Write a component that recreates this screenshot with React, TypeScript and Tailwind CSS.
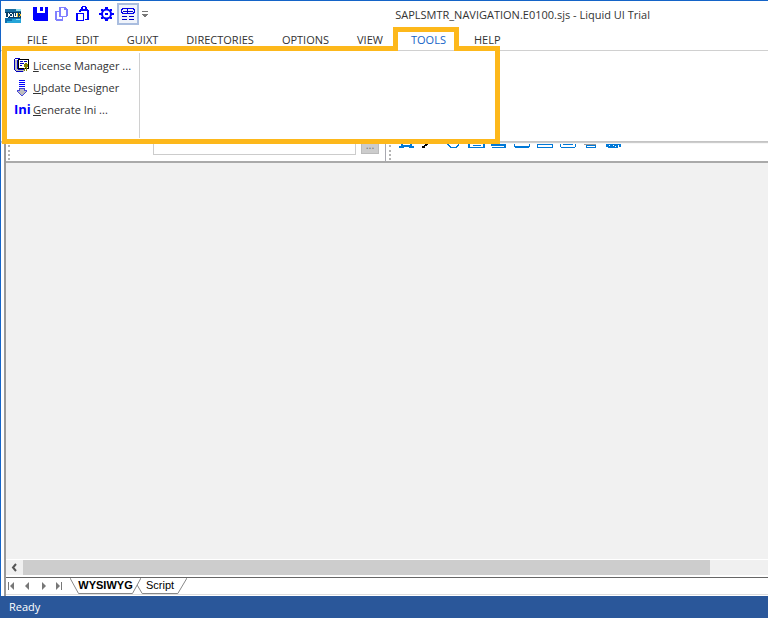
import React from "react";

const menus = ["FILE", "EDIT", "GUIXT", "DIRECTORIES", "OPTIONS", "VIEW", "TOOLS", "HELP"];

function Grip() {
  return <div className="mb-px mt-[3px] w-[3px] border-l-2 border-dotted border-[#b4b4b4]" />;
}

function AppLogo() {
  return (
    <svg width="16" height="20" shapeRendering="crispEdges" aria-hidden="true">
      <path d="M0 5h16v3H0z" fill="#1c6f9f" />
      <path d="M0 8h16v6H0z" fill="#073f66" />
      <path d="M0 14h16v5H0z" fill="#0d6fae" />
      <path d="M7 15h9v4H7zM2 17h5v2H2z" fill="#25a5d8" />
      <path d="M11 5h5v2h-5zM11 15h4v1h-4z" fill="#8fe0ee" />
      <path d="M0 9h1v4h2v1H0zM3 9h1v4H3zM5 9h2v1H5zM5 12h3v1H5zM4 10h1v2H4zM7 10h1v2H7zM9 9h1v3H9zM11 9h1v3h-1zM9 12h3v1H9z" fill="#fff" />
      <path d="M12 9h1v4h-1zM14 9h1v1h-1zM14 12h1v1h-1zM15 10h1v2h-1z" fill="#f2c230" />
    </svg>
  );
}

function SaveIcon() {
  return (
    <svg width="16" height="16" shapeRendering="crispEdges" aria-hidden="true">
      <path d="M0 1h4v6h8V1h2l1 1v13H1l-1-1zM7 1h3v4H7z" fill="#00f" />
    </svg>
  );
}

function CopyIcon() {
  return (
    <svg width="16" height="16" shapeRendering="crispEdges" aria-hidden="true">
      <path
        d="M4 1h7v1H4zM4 2h2v9H4zM4 10h8v1H4zM11 2h1v1h1v7h-2V4H9V2zM0 5h4v1H2v8H0zM1 13h7v2H1zM7 11h1v3H7z"
        fill="#8080ff"
      />
    </svg>
  );
}

function PasteIcon() {
  return (
    <svg width="16" height="16" shapeRendering="crispEdges" aria-hidden="true">
      <path
        d="M6 0h4v1H6zM5 1h2v2H5zM9 1h2v2H9zM4 3h8v2H4zM3 4h2v2H3zM11 4h2v10h-2zM9 13h4v1H9zM0 7h8v1H0zM0 7h2v8H0zM7 7h1v8H7zM0 14h8v1H0z"
        fill="#00f"
      />
    </svg>
  );
}

function GearIcon() {
  return (
    <svg width="16" height="16" aria-hidden="true">
      <circle cx="7.500" cy="8" r="4.500" fill="none" stroke="#00f" strokeWidth="2" />
      <path d="M6 1h3v2H6zM6 13h3v2H6zM0 7h3v2H0zM12 7h3v2h-3zM2 3h2v2H2zM11 3h2v2h-2zM2 11h2v2H2zM11 11h2v2h-2zM6 7h3v2H6z" fill="#00f" />
    </svg>
  );
}

function FormIcon() {
  return (
    <svg width="14" height="14" shapeRendering="crispEdges" aria-hidden="true">
      <path d="M1 1h12v1H1zM0 2h2v1H0zM12 2h2v1h-2zM0 3h1v2H0zM13 3h1v2h-1zM0 5h2v1H0zM12 5h2v1h-2zM1 6h12v1H1zM6 2h1v4H6z" fill="#0000e8" />
      <path d="M2 4h10v1H2zM1 9h5v1H1zM8 9h5v1H8zM1 12h5v1H1zM8 12h5v1H8z" fill="#0000c8" />
    </svg>
  );
}

function LicenseIcon() {
  return (
    <svg className="shrink-0" width="16" height="16" shapeRendering="crispEdges" aria-hidden="true">
      <path d="M1 2h4v9h5v3H2v-1H1z" fill="#bcbcbc" />
      <path d="M1 0h5v1H1zM0 1h1v11H0zM1 12h1v1H1zM2 13h7v1H2zM3 2h1v9H3z" fill="#0000c0" />
      <path d="M4 1h11v10H4z" fill="#000" />
      <path d="M5 2h9v8H5z" fill="#fff" />
      <path d="M6 3h3v1H6zM10 3h3v1h-3zM6 5h4v1H6zM6 7h2v1H6z" fill="#0000c0" />
      <path d="M10 6h4v3h-4zM11 5h2v5h-2zM10 10h1v3h-1zM12 10h1v3h-1z" fill="#808000" />
      <path d="M4 11h6v1H4z" fill="#0000c0" />
    </svg>
  );
}

function UpdateIcon() {
  return (
    <svg className="shrink-0" width="16" height="16" shapeRendering="crispEdges" aria-hidden="true">
      <path d="M5 0h6v1H5zM5 2h6v1H5zM5 4h6v1H5zM5 6h6v1H5z" fill="#00f" />
      <path d="M5 8h6v2h2v2h-1v1h-1v1h-1v1H9v1H7v-1H6v-1H5v-1H4v-1H3v-2h2z" fill="#4646d8" />
      <path d="M6 9h4v2h2v1h-1v1h-1v1H9v1H7v-1H6v-1H5v-1H4v-1h2z" fill="#bdbdbd" />
    </svg>
  );
}

function ControlIcons() {
  return (
    <svg width="224" height="6" shapeRendering="crispEdges" aria-hidden="true">
      <g fill="#0078d7">
        <path d="M2 0h2v1h7V0h2v2h2v2h-5V3H5v1H0V2h2z" />
        <path d="M48 0h2v1h1v1h1v1h5V2h1V1h1V0h1v2h-1v1h-1v1h-7V3h-1V2h-1z" />
        <path d="M69 0h2v3h13V0h2v4H69zM74 1h8v1h-8z" />
        <path d="M92 0h13v2h-13zM105 0h2v4H93V3h12z" />
        <path d="M115 0h1v2h14V0h1v3h-1v1h-14V3h-1z" />
        <path d="M138 0h1v3h14V0h1v4h-16zM138 0h16v1h-16z" />
        <path d="M161 0h1v3h14V0h1v3h-1v1h-14V3h-1zM164 0h10v1h-10z" />
        <path d="M187 1h10v1h-10zM187 3h10v1h-10zM187 1h1v3h-1zM196 1h1v3h-1z" />
        <path d="M207 0h15v3h-3v1h-10V3h-2z" />
      </g>
      <path d="M26 0h3v1h-1v1h-2v2h-3V2h2V1h1z" fill="#000" />
      <path d="M210 1h1v1h-1zM214 1h1v1h-1zM216 2h1v1h-1zM219 1h1v2h-1z" fill="#fff" />
      <path d="M185 0h12v1h-12z" fill="#999" />
    </svg>
  );
}

function SheetTab({ label, active, width }: { label: string; active?: boolean; width: string }) {
  return (
    <button
      role="tab"
      aria-selected={!!active}
      className={`relative -ml-2 flex h-4 items-start justify-center ${width} text-[11px] leading-[14px] text-black ${active ? "z-10 font-bold" : ""}`}
    >
      <svg className="absolute inset-0 h-full w-full" viewBox="0 0 100 16" preserveAspectRatio="none" aria-hidden="true">
        <path
          d={active ? "M0 0L12 15.500H88L100 0" : "M0 0L17 15.500H83L100 0"}
          fill="#fff"
          stroke="#888"
          vectorEffect="non-scaling-stroke"
        />
      </svg>
      <span className="relative">{label}</span>
    </button>
  );
}

const navArrows = [
  { name: "First sheet", path: "M1 0h1v8H1zM7 0v8L3 4z" },
  { name: "Previous sheet", path: "M6 0v8L2 4z" },
  { name: "Next sheet", path: "M3 0v8l4-4z" },
  { name: "Last sheet", path: "M1 0v8l4-4zM6 0h1v8H6z" },
];

export default function App() {
  return (
    <div className="relative flex min-h-screen flex-col bg-white font-['Open_Sans','Noto_Sans',sans-serif] text-[11px] text-[#333]">
      <div className="flex grow flex-col border-l border-t border-[#1464c8]">
        <header className="flex h-[27px] items-start">
          <div className="flex h-[25px] shrink-0 items-center pl-1">
            <AppLogo />
            <button aria-label="Save" className="ml-3"><SaveIcon /></button>
            <button aria-label="Copy" className="ml-[6px]"><CopyIcon /></button>
            <button aria-label="Paste" className="ml-[5px]"><PasteIcon /></button>
            <button aria-label="Settings" className="ml-[7px]"><GearIcon /></button>
            <button aria-label="Form view" className="ml-[2px] flex h-[22px] w-[22px] items-center justify-center border-2 border-[#a9bddf] bg-[#f0f4fb]">
              <FormIcon />
            </button>
            <button aria-label="Customize" className="ml-[3px]">
              <svg width="6" height="8" shapeRendering="crispEdges" aria-hidden="true">
                <path d="M0 1h6v1H0zM0 4h6v1H5v1H4v1H2V6H1V5H0z" fill="#777" />
              </svg>
            </button>
          </div>
          <h1 className="grow pr-[118px] text-right leading-7">SAPLSMTR_NAVIGATION.E0100.sjs - Liquid UI Trial</h1>
        </header>
        <nav className="flex h-[23px] border-b border-[#d0d0d0] pl-3">
          {menus.map((m) => (
            <button key={m} className={`px-[14px] leading-6 ${m === "TOOLS" ? "text-[#1464c8]" : ""}`}>{m}</button>
          ))}
        </nav>
        <section className="relative flex h-[91px] border-b border-[#c4c4c4] pb-[3px] pt-[2px] shadow-[0_1px_1px_#ccc]">
          <div className="flex w-[139px] flex-col whitespace-nowrap border-r border-[#d0d0d0] pl-[13px] pt-[2px]">
            <button className="flex h-[22px] items-center gap-[3px]"><LicenseIcon /><span><u>L</u>icense Manager ...</span></button>
            <button className="flex h-[22px] items-center gap-[3px]"><UpdateIcon /><span><u>U</u>pdate Designer</span></button>
            <button className="flex h-[22px] items-center gap-[3px]">
              <b className="w-4 text-left text-[13px] text-[#00f]">Ini</b>
              <span><u>G</u>enerate Ini ...</span>
            </button>
          </div>
        </section>
        <main className="ml-[3px] flex grow flex-col border-l-2 border-[#999]">
          <div className="flex h-[21px] border-b-2 border-[#aaa]">
            <div className="flex w-[380px] border-r border-[#a8a8b0] pl-[2px]">
              <Grip />
              <input aria-label="Field" className="ml-[142px] h-[13px] w-[203px] border border-t-0 border-[#ccc]" />
              <button aria-label="Browse" className="ml-[5px] flex h-3 w-[18px] items-start justify-center border border-[#bbb] bg-[#ccc] leading-[4px] text-[#777]">...</button>
            </div>
            <div className="flex pl-[3px]">
              <Grip />
              <div className="pl-[7px] pt-[2px]"><ControlIcons /></div>
            </div>
          </div>
          <div className="grow bg-[#f1f1f1]" />
          <div className="flex h-[18px] border-b-2 border-t border-white bg-[#f0f0f0]">
            <button aria-label="Scroll left" className="flex w-[17px] items-center justify-center pr-[2px]">
              <svg width="6" height="9" fill="none" stroke="#555" strokeWidth="2" aria-hidden="true"><path d="M5 1L2 4.500L5 8" /></svg>
            </button>
            <div className="grow"><div className="h-[15px] w-[92.2%] bg-[#cdcdcd]" /></div>
          </div>
          <div role="tablist" className="flex h-[18px] border-b border-t border-b-[#ddd] border-t-[#666] font-['Liberation_Sans',Arial,sans-serif]">
            <div className="flex w-[72px] items-center">
              {navArrows.map((a) => (
                <button key={a.name} aria-label={a.name} className="w-4 pl-px">
                  <svg width="8" height="8" fill="#777" aria-hidden="true"><path d={a.path} /></svg>
                </button>
              ))}
            </div>
            <SheetTab label="WYSIWYG" active width="w-[71px]" />
            <SheetTab label="Script" width="w-[54px]" />
          </div>
          <div className="h-px" />
        </main>
      </div>
      <footer className="h-[22px] bg-[#2a579a] pl-[9px] leading-[22px] text-white">Ready</footer>
      <svg className="pointer-events-none absolute left-0 top-0" width="502" height="146" fill="none" aria-hidden="true">
        <path d="M4.500 48.500H395.500V29.500H456.500V48.500H497.500V141.500H4.500Z" stroke="#fdb81b" strokeWidth="5" />
      </svg>
    </div>
  );
}
